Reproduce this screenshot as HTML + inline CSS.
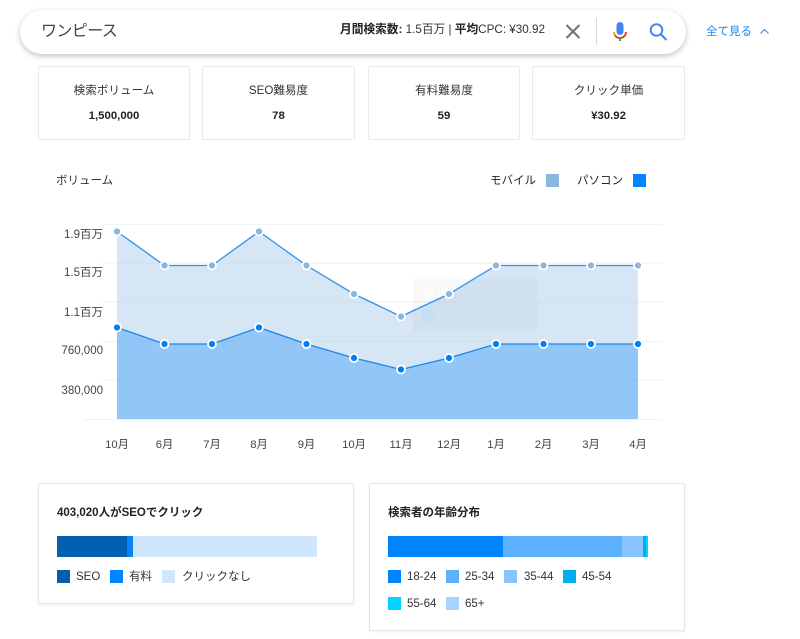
<!DOCTYPE html>
<html lang="ja">
<head>
<meta charset="utf-8">
<style>
html,body{margin:0;padding:0;background:#fff;}
body{width:800px;height:639px;position:relative;overflow:hidden;font-family:"Liberation Sans","Noto Sans CJK JP",sans-serif;color:#222;}
.a{position:absolute;white-space:nowrap;}
.search{left:20px;top:10px;width:666px;height:44px;border-radius:22px;background:#fff;box-shadow:0 2px 6px rgba(32,33,36,.28);}
.card{position:absolute;top:66px;height:72px;width:151px;border:1px solid #e8eaf0;border-radius:2px;background:#fff;text-align:center;}
.card .t{position:absolute;left:0;right:0;top:17px;font-size:11.6px;line-height:14px;color:#333;}
.card .v{position:absolute;left:0;right:0;top:42px;font-size:11.4px;line-height:14px;font-weight:bold;color:#222;}
.box{position:absolute;border:1px solid #e4e6ee;border-radius:2px;background:#fff;box-shadow:0 1px 2px rgba(60,64,90,.08);}
.sw{position:absolute;width:13px;height:13px;}
.l{position:absolute;font-size:11.5px;line-height:14px;color:#333;white-space:nowrap;}
.h{position:absolute;font-size:11.5px;line-height:14px;font-weight:bold;color:#222;white-space:nowrap;}
</style>
</head>
<body>
<div class="a search"></div>
<div class="a" style="left:41px;top:21px;font-size:16px;line-height:22px;letter-spacing:-.6px;color:#444;">ワンピース</div>
<div class="a" style="left:340px;top:22px;font-size:11.7px;line-height:15px;color:#333;"><b style="color:#222">月間検索数:</b> 1.5百万 | <b style="color:#222">平均</b>CPC: ¥30.92</div>
<svg class="a" style="left:560px;top:18px" width="110" height="28" viewBox="0 0 110 28">
<path d="M6.5 7 L19.500 20 M19.500 7 L6.500 20" stroke="#6f7276" stroke-width="2" fill="none"/>
<rect x="36" y="0" width="1" height="27" fill="#d8dadd"/>
<rect x="56.500" y="4" width="7" height="13" rx="3.500" fill="#4285f4"/>
<path d="M54.500 16.500 A6 6 0 0 0 60 20 A6 6 0 0 0 66 14" stroke="#ea4335" stroke-width="2" fill="none"/>
<path d="M54 14 A6 6 0 0 0 55 17.300" stroke="#f4b400" stroke-width="2" fill="none"/>
<rect x="59" y="20" width="2" height="3" fill="#34a853"/>
<circle cx="96.500" cy="12" r="5.800" stroke="#4285f4" stroke-width="2" fill="none"/>
<path d="M100.500 16 L106.500 22" stroke="#4285f4" stroke-width="2.200" fill="none"/>
</svg>
<div class="a" style="left:706px;top:25px;font-size:11.5px;line-height:15px;color:#1a85ee;">全て見る</div>
<svg class="a" style="left:759px;top:27px" width="11" height="9" viewBox="0 0 11 9"><path d="M1.500 6.500 L5.500 2.500 L9.500 6.500" stroke="#3d94ee" stroke-width="1.200" fill="none"/></svg>

<div class="card" style="left:38px;width:150px"><div class="t">検索ボリューム</div><div class="v">1,500,000</div></div>
<div class="card" style="left:202px"><div class="t">SEO難易度</div><div class="v">78</div></div>
<div class="card" style="left:368px;width:150px"><div class="t">有料難易度</div><div class="v">59</div></div>
<div class="card" style="left:532px"><div class="t">クリック単価</div><div class="v">¥30.92</div></div>

<div class="a" style="left:56px;top:174px;font-size:11.5px;line-height:15px;color:#333;">ボリューム</div>
<div class="a" style="left:490px;top:174px;font-size:11.5px;line-height:15px;color:#222;">モバイル</div>
<div class="a" style="left:546px;top:174px;width:13px;height:13px;background:#8ab6e0;"></div>
<div class="a" style="left:577px;top:174px;font-size:11.5px;line-height:15px;color:#222;">パソコン</div>
<div class="a" style="left:633px;top:174px;width:13px;height:13px;background:#0084ff;"></div>

<svg class="a" style="left:0;top:210px" width="700" height="250" viewBox="0 210 700 250">
<g stroke="#f1f2f4" stroke-width="1">
<path d="M103 224.500H662M103 263H662M103 302H662M103 341.500H662M103 380H662M84 419.500H662"/>
</g>
<path d="M117 231.500L164.500 265.500L212 265.500L259 231.500L306.500 265.500L354 294L401 316.500L449 294L496 265.500L543.500 265.500L591 265.500L638 265.500V419H117Z" fill="#d6e6f5"/>
<path d="M117 327.500L164.500 344L212 344L259 327.500L306.500 344L354 358L401 369.500L449 358L496 344L543.500 344L591 344L638 344V419H117Z" fill="#91c6f6"/>
<path d="M117 263H638M117 302H638M117 341.500H638M117 380H638" stroke="#000" stroke-opacity=".025" stroke-width="1"/>
<path d="M413 281a2 2 0 0 1 2-2H535a2 2 0 0 1 2 2V299L541 303L537 307V329a2 2 0 0 1-2 2H415a2 2 0 0 1-2-2Z" fill="#000" fill-opacity=".025"/>
<rect x="422" y="288" width="13" height="13" fill="#fff" fill-opacity=".3" stroke="#000" stroke-opacity=".02"/>
<rect x="422" y="309" width="13" height="13" fill="#c2dcf6" fill-opacity=".8"/>
<path d="M117 231.500L164.500 265.500L212 265.500L259 231.500L306.500 265.500L354 294L401 316.500L449 294L496 265.500L543.500 265.500L591 265.500L638 265.500" fill="none" stroke="#2b93ee" stroke-width="1.300"/>
<path d="M117 327.500L164.500 344L212 344L259 327.500L306.500 344L354 358L401 369.500L449 358L496 344L543.500 344L591 344L638 344" fill="none" stroke="#1a88ee" stroke-width="1.300"/>
<g fill="#8ab6e0" stroke="#fff" stroke-width="1.800">
<circle cx="117" cy="231.500" r="4"/><circle cx="164.500" cy="265.500" r="4"/><circle cx="212" cy="265.500" r="4"/><circle cx="259" cy="231.500" r="4"/><circle cx="306.500" cy="265.500" r="4"/><circle cx="354" cy="294" r="4"/><circle cx="401" cy="316.500" r="4"/><circle cx="449" cy="294" r="4"/><circle cx="496" cy="265.500" r="4"/><circle cx="543.500" cy="265.500" r="4"/><circle cx="591" cy="265.500" r="4"/><circle cx="638" cy="265.500" r="4"/>
</g>
<g fill="#0080f5" stroke="#fff" stroke-width="1.800">
<circle cx="117" cy="327.500" r="4"/><circle cx="164.500" cy="344" r="4"/><circle cx="212" cy="344" r="4"/><circle cx="259" cy="327.500" r="4"/><circle cx="306.500" cy="344" r="4"/><circle cx="354" cy="358" r="4"/><circle cx="401" cy="369.500" r="4"/><circle cx="449" cy="358" r="4"/><circle cx="496" cy="344" r="4"/><circle cx="543.500" cy="344" r="4"/><circle cx="591" cy="344" r="4"/><circle cx="638" cy="344" r="4"/>
</g>
<g font-family="'Liberation Sans','Noto Sans CJK JP',sans-serif" font-size="11.500" fill="#444" text-anchor="end">
<text x="103" y="238">1.9百万</text>
<text x="103" y="276">1.5百万</text>
<text x="103" y="316">1.1百万</text>
<text x="103" y="354">760,000</text>
<text x="103" y="394">380,000</text>
</g>
<g font-family="'Liberation Sans','Noto Sans CJK JP',sans-serif" font-size="11.300" fill="#444" text-anchor="middle">
<text x="117" y="448">10月</text><text x="164.500" y="448">6月</text><text x="212" y="448">7月</text><text x="259" y="448">8月</text><text x="306.500" y="448">9月</text><text x="354" y="448">10月</text><text x="401" y="448">11月</text><text x="449" y="448">12月</text><text x="496" y="448">1月</text><text x="543.500" y="448">2月</text><text x="591" y="448">3月</text><text x="638" y="448">4月</text>
</g>
</svg>

<div class="box" style="left:38px;top:483px;width:314px;height:119px;"></div>
<div class="h" style="left:57px;top:506px;">403,020人がSEOでクリック</div>
<div class="a" style="left:57px;top:536px;width:70px;height:21px;background:#0260b0;"></div>
<div class="a" style="left:127px;top:536px;width:6px;height:21px;background:#0a84f5;"></div>
<div class="a" style="left:133px;top:536px;width:184px;height:21px;background:#cfe6fd;"></div>
<div class="sw" style="left:57px;top:570px;background:#0260b0;"></div><div class="l" style="left:76px;top:570px;">SEO</div>
<div class="sw" style="left:110px;top:570px;background:#0084ff;"></div><div class="l" style="left:129px;top:570px;">有料</div>
<div class="sw" style="left:162px;top:570px;background:#cfe6fd;"></div><div class="l" style="left:182px;top:570px;">クリックなし</div>

<div class="box" style="left:369px;top:483px;width:314px;height:146px;"></div>
<div class="h" style="left:388px;top:506px;">検索者の年齢分布</div>
<div class="a" style="left:388px;top:536px;width:115px;height:21px;background:#0084fb;"></div>
<div class="a" style="left:503px;top:536px;width:119px;height:21px;background:#5cb1ff;"></div>
<div class="a" style="left:622px;top:536px;width:21px;height:21px;background:#8ac4ff;"></div>
<div class="a" style="left:643px;top:536px;width:3px;height:21px;background:#00aeee;"></div>
<div class="a" style="left:646px;top:536px;width:2px;height:21px;background:#00d4ff;"></div>
<div class="sw" style="left:388px;top:570px;background:#0084fb;"></div><div class="l" style="left:407px;top:570px;">18-24</div>
<div class="sw" style="left:446px;top:570px;background:#5cb1ff;"></div><div class="l" style="left:465px;top:570px;">25-34</div>
<div class="sw" style="left:504px;top:570px;background:#8ac4ff;"></div><div class="l" style="left:524px;top:570px;">35-44</div>
<div class="sw" style="left:563px;top:570px;background:#00aeee;"></div><div class="l" style="left:582px;top:570px;">45-54</div>
<div class="sw" style="left:388px;top:597px;background:#00d4ff;"></div><div class="l" style="left:407px;top:597px;">55-64</div>
<div class="sw" style="left:446px;top:597px;background:#a8d2ff;"></div><div class="l" style="left:465px;top:597px;">65+</div>
</body>
</html>
